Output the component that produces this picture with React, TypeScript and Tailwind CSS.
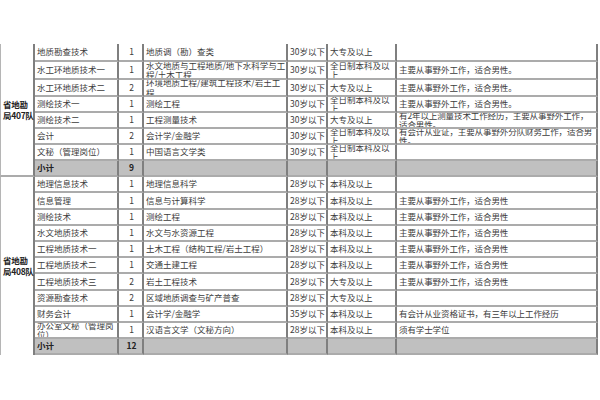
import React from 'react'

type Row = [string, string, string, string, string, string]

const team407: Row[] = [
  ['地质勘查技术', '1', '地质调（勘）查类', '30岁以下', '大专及以上', ''],
  ['水工环地质技术一', '1', '水文地质与工程地质/地下水科学与工程/土木工程', '30岁以下', '全日制本科及以上', '主要从事野外工作，适合男性。'],
  ['水工环地质技术二', '2', '环境地质工程/建筑工程技术/岩土工程', '30岁以下', '大专及以上', '主要从事野外工作，适合男性。'],
  ['测绘技术一', '1', '测绘工程', '30岁以下', '全日制本科及以上', '主要从事野外工作，适合男性。'],
  ['测绘技术二', '1', '工程测量技术', '30岁以下', '大专及以上', '有2年以上测量技术工作经历，主要从事野外工作，适合男性。'],
  ['会计', '2', '会计学/金融学', '30岁以下', '全日制本科及以上', '有会计从业证，主要从事野外分队财务工作，适合男性。'],
  ['文秘（管理岗位）', '1', '中国语言文学类', '30岁以下', '全日制本科及以上', ''],
]

const team408: Row[] = [
  ['地理信息技术', '1', '地理信息科学', '28岁以下', '本科及以上', ''],
  ['信息管理', '1', '信息与计算科学', '28岁以下', '本科及以上', '主要从事野外工作，适合男性'],
  ['测绘技术', '1', '测绘工程', '28岁以下', '本科及以上', '主要从事野外工作，适合男性'],
  ['水文地质技术', '1', '水文与水资源工程', '28岁以下', '本科及以上', '主要从事野外工作，适合男性'],
  ['工程地质技术一', '1', '土木工程（结构工程/岩土工程）', '28岁以下', '本科及以上', '主要从事野外工作，适合男性'],
  ['工程地质技术二', '1', '交通土建工程', '28岁以下', '本科及以上', '主要从事野外工作，适合男性'],
  ['工程地质技术三', '2', '岩土工程技术', '28岁以下', '大专及以上', '主要从事野外工作，适合男性'],
  ['资源勘查技术', '2', '区域地质调查与矿产普查', '28岁以下', '大专及以上', ''],
  ['财务会计', '1', '会计学/金融学', '35岁以下', '本科及以上', '有会计从业资格证书，有三年以上工作经历'],
  ['办公室文秘（管理岗位）', '1', '汉语言文学（文秘方向）', '28岁以下', '本科及以上', '须有学士学位'],
]

const cell = 'border-r-2 border-r-[#7f7f7f] border-b-2 border-b-[#ababab] overflow-hidden flex items-center pl-[2px]'

const Section = ({ name, rows, total, rowsClass, span, last }: { name: string; rows: Row[]; total: string; rowsClass: string; span: string; last?: boolean }) => {
  const sub = `${cell} bg-[#c0c0c0] ${last ? 'border-b-0' : ''}`
  return (
    <div className={`grid grid-cols-[35px_84px_25px_144px_40px_69px_201px] ${rowsClass}`}>
      <div className={`${span} border-l border-l-[#b5b5b5] border-r-2 border-r-[#7f7f7f] ${last ? '' : 'border-b-2 border-b-[#ababab]'} flex items-center pl-[2px] font-bold text-[#222] leading-[11px] whitespace-nowrap tracking-[-0.3px]`}>
        <div>{name.slice(0, 3)}<br />{name.slice(3)}</div>
      </div>
      {rows.map((r, i) => (
        <React.Fragment key={i}>
          <div className={cell}><span>{r[0]}</span></div>
          <div className={`${cell} justify-center pl-0`}>{r[1]}</div>
          <div className={cell}><span>{r[2]}</span></div>
          <div className={cell}><span className="whitespace-nowrap">{r[3]}</span></div>
          <div className={cell}><span>{r[4]}</span></div>
          <div className={`${cell} pl-[1px]`}><span className="tracking-[-0.1px]">{r[5]}</span></div>
        </React.Fragment>
      ))}
      <div className={`${sub} font-bold text-[#222]`}>小计</div>
      <div className={`${sub} font-bold text-[#222] justify-center pl-0`}>{total}</div>
      <div className={sub}></div>
      <div className={sub}></div>
      <div className={sub}></div>
      <div className={sub}></div>
    </div>
  )
}

export default function App() {
  return (
    <div className="w-[600px] h-[400px] bg-white pt-[44px] text-[8.5px] leading-[9.5px] text-[#3c3c3c] font-['Noto_Sans_CJK_SC','Liberation_Sans',sans-serif]">
      <Section name="省地勘局407队" rows={team407} total="9" span="row-span-8" rowsClass="grid-rows-[18px_18px_17px_16px_16px_16px_16px_16px]" />
      <Section name="省地勘局408队" rows={team408} total="12" span="row-span-11" last rowsClass="grid-rows-[16px_17px_16px_16px_16px_16px_17px_16px_16px_16px_16px]" />
    </div>
  )
}
